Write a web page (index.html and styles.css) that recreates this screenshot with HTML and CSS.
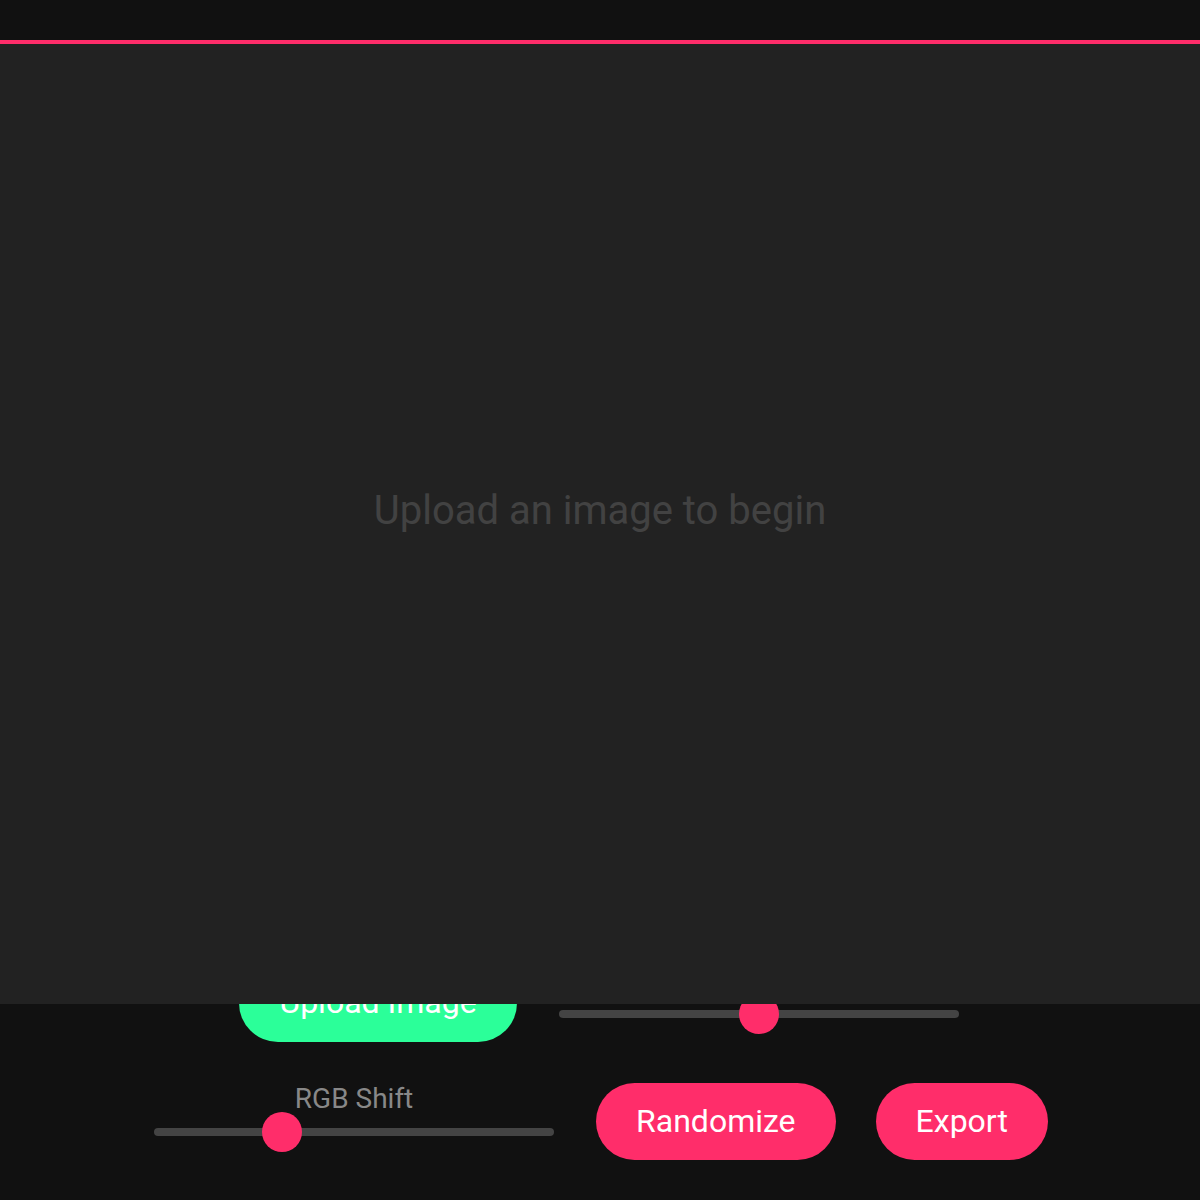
FILE: index.html
```html
<!DOCTYPE html>
<html lang="en">
<head>
<meta charset="utf-8">
<title>Glitch Studio</title>
<link rel="stylesheet" href="styles.css">
</head>
<body>
  <header class="topbar"></header>
  <main class="stage">
    <p class="placeholder">Upload an image to begin</p>
  </main>
  <section class="controls">
    <button class="btn btn-green">Upload Image</button>
    <div class="control-group">
      <label class="control-label">Glitch Intensity</label>
      <input class="slider" type="range" min="0" max="100" value="50">
    </div>
    <div class="control-group">
      <label class="control-label">RGB Shift</label>
      <input class="slider" type="range" min="0" max="100" value="30">
    </div>
    <button class="btn btn-pink">Randomize</button>
    <button class="btn btn-pink">Export</button>
  </section>
</body>
</html>
```
FILE: styles.css
```css
* { box-sizing: border-box; }

html, body {
  margin: 0;
  padding: 0;
  background: #111111;
  font-family: Roboto, "Liberation Sans", Arial, sans-serif;
  height: 1200px;
  overflow: hidden;
}

.topbar {
  height: 44px;
  background: #111111;
  border-bottom: 4px solid #ff2d6a;
}

.stage {
  position: relative;
  z-index: 1;
  height: 960px;
  background: #222222;
  display: flex;
  align-items: center;
  justify-content: center;
  padding-bottom: 28px;
}

.placeholder {
  margin: 0;
  font-size: 40px;
  color: #424242;
}

.controls {
  width: 960px;
  margin: -40px auto 0;
  display: flex;
  flex-wrap: wrap;
  justify-content: center;
  align-items: flex-start;
  column-gap: 40px;
  row-gap: 41px;
}

.btn {
  border: none;
  font-family: Roboto, "Liberation Sans", Arial, sans-serif;
  font-size: 32px;
  font-weight: 400;
  line-height: 1.172;
  color: #ffffff;
  padding: 20px 40px;
  border-radius: 40px;
  cursor: pointer;
}

.btn-green { background: #2bff99; }
.btn-pink { background: #ff2d6a; }

.control-group {
  display: flex;
  flex-direction: column;
  align-items: center;
}

.control-label {
  font-size: 28px;
  line-height: 1.172;
  color: #888888;
}

.slider {
  -webkit-appearance: none;
  appearance: none;
  width: 400px;
  height: 8px;
  margin: 13px 2px 0;
  background: #444444;
  border-radius: 4px;
  outline: none;
}

.slider::-webkit-slider-thumb {
  -webkit-appearance: none;
  appearance: none;
  width: 40px;
  height: 40px;
  border-radius: 50%;
  background: #ff2d6a;
  border: none;
}
```
